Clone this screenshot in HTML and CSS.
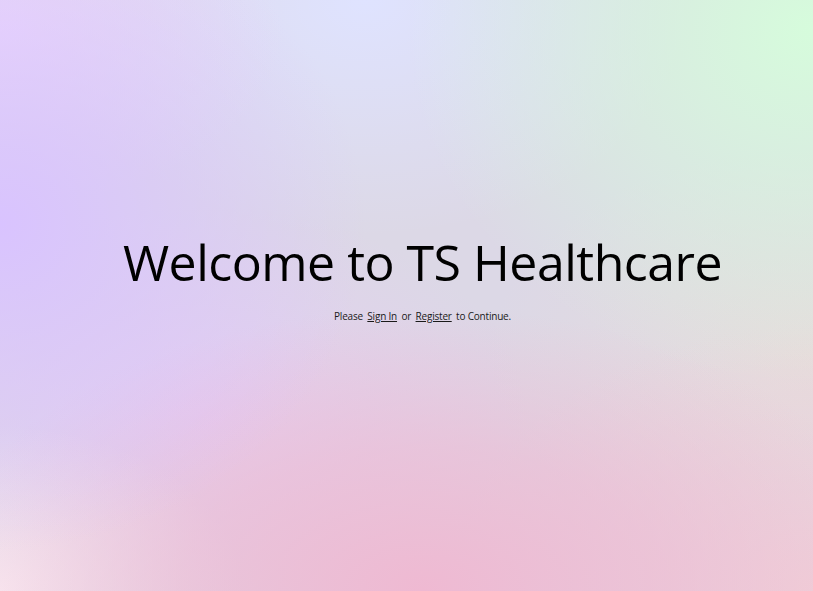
FILE: index.html
```html
<!DOCTYPE html>
<html lang="en">
<head>
<meta charset="utf-8">
<title>TS Healthcare</title>
<link rel="stylesheet" href="styles.css">
</head>
<body>
<main class="hero">
  <h1 class="title">Welcome to TS Healthcare</h1>
  <p class="sub">Please <a href="#" class="link">Sign In</a> or <a href="#" class="link">Register</a> to Continue.</p>
</main>
</body>
</html>
```
FILE: styles.css
```css
html, body {
  margin: 0;
  height: 100%;
}
body {
  font-family: "Open Sans", "Noto Sans", sans-serif;
  color: #000;
  background-color: #dcd8e6;
  background-image:
    radial-gradient(ellipse 50% 60% at 100% 5%, #d6fcdc 0%, rgba(214,252,220,0.6) 40%, rgba(214,252,220,0) 100%),
    radial-gradient(ellipse 45% 55% at 0% 38%, #d9c3ff 0%, rgba(217,195,255,0.5) 50%, rgba(217,195,255,0) 100%),
    radial-gradient(ellipse 35% 30% at 0% 5%, #ead6fc 0%, rgba(234,214,252,0) 100%),
    radial-gradient(ellipse 60% 48% at 52% 100%, #efb9d2 0%, rgba(239,185,210,0.6) 50%, rgba(239,185,210,0) 100%),
    radial-gradient(ellipse 30% 28% at 0% 100%, #f9eaf2 0%, rgba(249,234,242,0) 100%),
    radial-gradient(ellipse 45% 45% at 100% 100%, #f0d0d8 0%, rgba(240,208,216,0) 100%),
    radial-gradient(ellipse 40% 40% at 45% 0%, #dfe3ff 0%, rgba(223,227,255,0) 100%),
    radial-gradient(ellipse 40% 35% at 100% 60%, #e6dcdc 0%, rgba(230,220,220,0) 100%),
    radial-gradient(ellipse 40% 35% at 25% 70%, #e4cdf0 0%, rgba(228,205,240,0) 100%);
}
.hero {
  box-sizing: border-box;
  height: 591px;
  padding: 0 0 32px 32px;
  display: flex;
  flex-direction: column;
  align-items: center;
  justify-content: center;
}
.title {
  margin: 0;
  font-size: 50px;
  font-weight: 400;
  line-height: 1;
  letter-spacing: -0.5px;
}
.sub {
  margin: 22px 0 0;
  font-size: 10px;
  color: #1a1a1a;
  letter-spacing: -0.2px;
}
.link {
  color: #1a1a1a;
  text-decoration: underline;
  margin: 0 2px;
}
```
